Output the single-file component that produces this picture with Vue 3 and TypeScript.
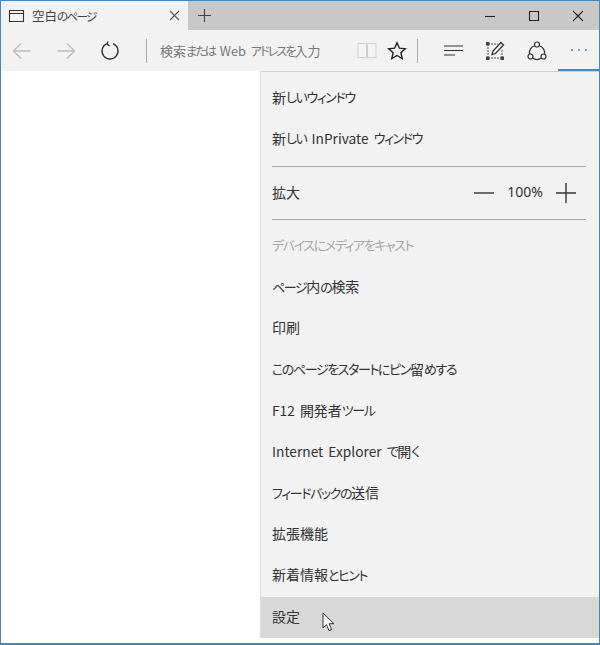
<script setup lang="ts">
interface Item { label: string; disabled?: boolean; hover?: boolean }
interface Run { text: string; kind: string }

const top: Item[] = [
  { label: '新しいウィンドウ' },
  { label: '新しい InPrivate ウィンドウ' },
]
const rest: Item[] = [
  { label: 'デバイスにメディアをキャスト', disabled: true },
  { label: 'ページ内の検索' },
  { label: '印刷' },
  { label: 'このページをスタートにピン留めする' },
  { label: 'F12 開発者ツール' },
  { label: 'Internet Explorer で開く' },
  { label: 'フィードバックの送信' },
  { label: '拡張機能' },
  { label: '新着情報とヒント' },
  { label: '設定', hover: true },
]

// The reference font sets kana visibly narrower than kanji, so each script gets its own run.
function runs(label: string): Run[] {
  const parts = label.match(/[\u4e00-\u9fff]+|[\u3040-\u30ff]+|[^\u4e00-\u9fff\u3040-\u30ff]+/g) ?? []
  return parts.map((text) => ({
    text,
    kind: /[\u4e00-\u9fff]/.test(text) ? 'kanji' : /[\u3040-\u30ff]/.test(text) ? 'kana' : 'latin',
  }))
}
</script>

<template>
  <div class="window">
    <div class="tabstrip">
      <div class="tab">
        <svg class="tabicon" width="17" height="14" viewBox="0 0 17 14"><path d="M1.500 1.500h14v11h-14zM1.500 4.500h14" fill="none" stroke="#333" stroke-width="1.100"/></svg>
        <span class="tabtitle"><span v-for="r in runs('空白のページ')" :key="r.text" :class="r.kind">{{ r.text }}</span></span>
        <svg class="tabclose" width="11" height="11" viewBox="0 0 11 11"><path d="M1 1l9 9M10 1l-9 9" stroke="#555" stroke-width="1.100"/></svg>
      </div>
      <svg class="newtab" width="15" height="15" viewBox="0 0 15 15"><path d="M7.500 1v13M1 7.500h13" stroke="#444" stroke-width="1.100"/></svg>
      <div class="winbtns">
        <svg width="12" height="12" viewBox="0 0 12 12"><path d="M1 6.500h10" stroke="#222" stroke-width="1.100"/></svg>
        <svg width="12" height="12" viewBox="0 0 12 12"><path d="M1.500 1.500h9v9h-9z" fill="none" stroke="#222" stroke-width="1.100"/></svg>
        <svg width="12" height="12" viewBox="0 0 12 12"><path d="M1 1l10 10M11 1l-10 10" stroke="#222" stroke-width="1.100"/></svg>
      </div>
    </div>
    <div class="toolbar">
      <svg class="nav" width="20" height="18" viewBox="0 0 20 18"><path d="M18.500 9H1.500M9 1.500L1.500 9L9 16.500" fill="none" stroke="#bdbdbd" stroke-width="1.300"/></svg>
      <svg class="nav gap" width="20" height="18" viewBox="0 0 20 18"><path d="M1.500 9h17M11 1.500L18.500 9L11 16.500" fill="none" stroke="#bdbdbd" stroke-width="1.300"/></svg>
      <svg class="nav gap" width="20" height="20" viewBox="0 0 20 20"><path d="M7 2.600A8 8 0 1 0 13 2.600M8 0.500L7 3L9.500 5" fill="none" stroke="#333" stroke-width="1.300"/></svg>
      <span class="sep sep1"></span>
      <span class="address"><span v-for="r in runs('検索または Web アドレスを入力')" :key="r.text" :class="r.kind">{{ r.text }}</span></span>
      <svg class="book" width="20" height="17" viewBox="0 0 20 17"><path d="M1 1.500h8.500l.5 1 .5-1H19v14h-8.500l-.5 1-.5-1H1zM9.500 2.500v12.500M10.500 2.500v12.500" fill="#f4f4f4" stroke="#cfcfcf" stroke-width="1"/></svg>
      <svg class="star" width="20" height="19" viewBox="0 0 20 19"><path d="M10 1.800l2.400 5.400 5.900.6-4.400 3.900 1.300 5.800L10 14.500l-5.200 3 1.300-5.800-4.400-3.900 5.900-.6z" fill="none" stroke="#222" stroke-width="1.400"/></svg>
      <span class="sep sep2"></span>
      <svg class="hub" width="20" height="12" viewBox="0 0 20 12"><path d="M0 1h19M0 5.500h19M0 10h11" stroke="#333" stroke-width="1.200"/></svg>
      <svg class="note" width="20" height="20" viewBox="0 0 20 20"><path d="M3 3h10M3 17h14M3 3v14M17 9v8" fill="none" stroke="#555" stroke-width="1" stroke-dasharray="2 1"/><path d="M1 1h3.500v3.500H1zM1 15.500h3.500V19H1zM15.500 15.500H19V19h-3.500z" fill="#444"/><path d="M7 13.500l1-3.500 8-8.500 2.500 2.500-8 8.500z" fill="#f2f2f2" stroke="#333" stroke-width="1.300"/></svg>
      <svg class="share" width="20" height="20" viewBox="0 0 20 20"><g fill="none" stroke="#333" stroke-width="1.200"><circle cx="10" cy="3.500" r="2.500"/><circle cx="3.500" cy="15.500" r="2.500"/><circle cx="16.500" cy="15.500" r="2.500"/><path d="M7.700 4.700A7.500 7.500 0 0 0 2.500 13M6 17.300a7.500 7.500 0 0 0 8 0M17.500 13a7.500 7.500 0 0 0-5.200-8.300"/></g></svg>
      <div class="more"><i></i><i></i><i></i></div>
    </div>
    <div class="content">
      <div class="menu">
        <div v-for="it in top" :key="it.label" class="item"><span v-for="r in runs(it.label)" :key="r.text" :class="r.kind">{{ r.text }}</span></div>
        <div class="rule"></div>
        <div class="zoom">
          <span class="lift kanji">拡大</span>
          <div class="zoomctl">
            <svg width="20" height="20" viewBox="0 0 20 20"><path d="M0 10h20" stroke="#333" stroke-width="1.400"/></svg>
            <span class="pct lift">100%</span>
            <svg width="20" height="20" viewBox="0 0 20 20"><path d="M0 10h20M10 0v20" stroke="#333" stroke-width="1.400"/></svg>
          </div>
        </div>
        <div class="rule second"></div>
        <div v-for="it in rest" :key="it.label" class="item" :class="{ disabled: it.disabled, hover: it.hover }"><span v-for="r in runs(it.label)" :key="r.text" :class="r.kind">{{ r.text }}</span></div>
        <svg class="cursor" width="13" height="20" viewBox="0 0 13 20"><path d="M1 1v15l3.500-3.300 2.600 6 2.600-1.100-2.600-5.900h4.800z" fill="#fff" stroke="#333" stroke-width="1"/></svg>
      </div>
    </div>
  </div>
</template>

<style scoped>
.window {
  width: 600px;
  height: 645px;
  box-sizing: border-box;
  border: 1px solid #4a86b8;
  border-width: 1px 1px 2px 1px;
  background: #fff;
  display: flex;
  flex-direction: column;
  font-family: "Noto Sans CJK JP", "Noto Sans", sans-serif;
  font-size: 14px;
  font-feature-settings: "palt";
  color: #333;
  overflow: hidden;
}
.kanji { font-size: 1em; }
.kana { font-size: 0.93em; letter-spacing: -0.11em; }
.latin { font-size: 0.98em; white-space: pre; word-spacing: 2px; }
.tabstrip {
  height: 29px;
  background: #c8c8c8;
  display: flex;
  align-items: center;
  flex: none;
}
.tab {
  width: 187px;
  height: 100%;
  background: #f2f2f2;
  display: flex;
  align-items: center;
  box-sizing: border-box;
  padding: 0 6px 0 7px;
}
.tabtitle { margin-left: 7px; flex: 1; font-size: 12.500px; color: #444; }
.tabtitle .kana { letter-spacing: -0.15em; }
.tabclose { margin-right: 2px; }
.newtab { margin-left: 9px; }
.winbtns { margin-left: auto; display: flex; gap: 32px; padding-right: 15px; }
.toolbar {
  height: 41px;
  background: #f2f2f2;
  display: flex;
  align-items: center;
  flex: none;
  position: relative;
  padding-left: 11px;
}
.nav.gap { margin-left: 24px; }
.sep { width: 1px; height: 24px; background: #aaa; }
.sep1 { margin-left: 26px; }
.address { margin-left: 13px; color: #777; font-size: 13px; width: 197px; white-space: nowrap; }
.address .kana { letter-spacing: -0.16em; }
.star { margin-left: 10px; }
.sep2 { margin-left: 10px; }
.hub { margin-left: 26px; }
.note { margin-left: 21px; }
.share { margin-left: 22px; }
.more {
  position: absolute;
  right: 0;
  bottom: 0;
  width: 41px;
  height: 100%;
  box-sizing: border-box;
  border-bottom: 2px solid #3a8ac4;
  display: flex;
  align-items: center;
  justify-content: center;
  gap: 5px;
}
.more i { width: 2px; height: 2px; background: #3a8ac4; border-radius: 50%; }
.content { flex: 1; display: flex; justify-content: flex-end; align-items: flex-start; min-height: 0; }
.menu {
  width: 339px;
  height: 567px;
  box-sizing: border-box;
  background: #f2f2f2;
  border-top: 1px solid #cfcfcf;
  border-left: 1px solid #dcdcdc;
  padding-top: 6px;
  position: relative;
}
.item {
  height: 41.200px;
  box-sizing: border-box;
  display: flex;
  align-items: center;
  padding: 0 11px 4px;
  white-space: nowrap;
}
.item.disabled { color: #a6a6a6; }
.item.hover { background: #d8d8d8; }
.rule { height: 1px; background: #a8a8a8; margin: 6px 13px 0 11px; }
.rule.second { margin: 0 13px 6px 11px; }
.zoom {
  height: 52px;
  display: flex;
  align-items: center;
  justify-content: space-between;
  padding: 0 23px 0 11px;
}
.lift { padding-bottom: 3px; }
.zoomctl { display: flex; align-items: center; }
.pct { width: 62px; text-align: center; font-size: 14px; font-family: "Noto Sans", sans-serif; }
.cursor { position: absolute; left: 61px; bottom: 6px; }
</style>
